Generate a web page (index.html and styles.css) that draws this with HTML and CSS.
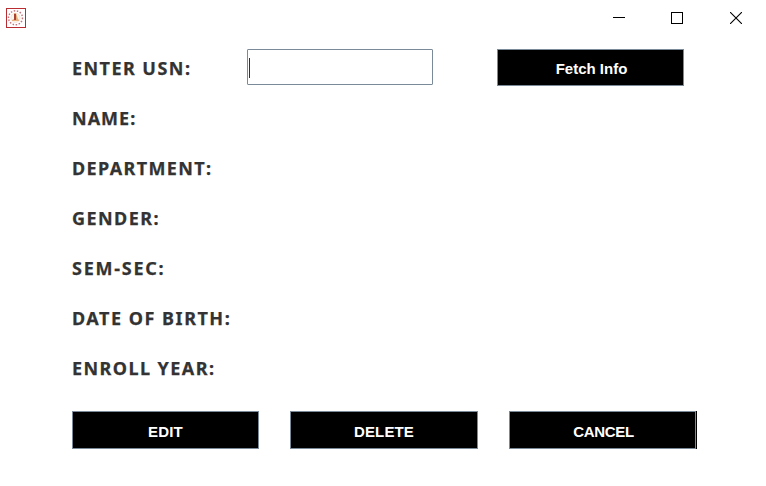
FILE: index.html
```html
<!DOCTYPE html>
<html lang="en">
<head>
<meta charset="utf-8">
<title>Student Info</title>
<link rel="stylesheet" href="styles.css">
</head>
<body>
<div class="window">
  <header class="titlebar">
    <svg class="app-icon" width="20" height="20" viewBox="0 0 20 20">
      <rect x=".5" y=".5" width="19" height="19" fill="#fff" stroke="#b92c31"/>
      <circle cx="9.5" cy="9.8" r="7" fill="none" stroke="#c4757c" stroke-width="1.5" stroke-dasharray="1.5 1.6"/>
      <circle cx="9.5" cy="9.8" r="4.6" fill="#fdf6ea" stroke="#f0dfd4" stroke-width=".8"/>
      <path d="M8 5h2l1 3 1 3 1 1v1H6v-1l2-1V8z" fill="#e8b07c"/>
      <path d="M8 6h2v6H8z" fill="#a94232"/>
    </svg>
    <div class="controls">
      <svg width="12" height="12" viewBox="0 0 12 12" shape-rendering="crispEdges"><path d="M0 5.5h12" stroke="#000"/></svg>
      <svg width="12" height="12" viewBox="0 0 12 12" shape-rendering="crispEdges"><rect x=".5" y=".5" width="11" height="11" fill="none" stroke="#000"/></svg>
      <svg width="12" height="12" viewBox="0 0 12 12"><path d="M0 0l12 12M12 0L0 12" stroke="#000" stroke-width="1.1"/></svg>
    </div>
  </header>
  <main class="form">
    <div class="row lookup">
      <span class="label usn">ENTER USN:</span>
      <div class="field"><span class="caret"></span></div>
      <button class="button fetch">Fetch Info</button>
    </div>
    <div class="row"><span class="label name">NAME:</span></div>
    <div class="row"><span class="label department">DEPARTMENT:</span></div>
    <div class="row"><span class="label gender">GENDER:</span></div>
    <div class="row"><span class="label section">SEM-SEC:</span></div>
    <div class="row"><span class="label birth">DATE OF BIRTH:</span></div>
    <div class="row"><span class="label year">ENROLL YEAR:</span></div>
    <div class="actions">
      <button class="button edit">EDIT</button>
      <button class="button delete">DELETE</button>
      <button class="button cancel">CANCEL</button>
    </div>
  </main>
</div>
</body>
</html>
```

FILE: styles.css
```css
* { box-sizing: border-box; }
body { margin: 0; background: #fff; }
.window { width: 766px; height: 486px; overflow: hidden; background: #fff; }
.titlebar { display: flex; justify-content: space-between; height: 36px; padding: 8px 24px 0 6px; }
.titlebar svg { display: block; }
.controls { display: flex; gap: 46px; padding-top: 4px; }
.controls svg:last-child { margin-left: 1px; }
.form { padding: 8px 0 0 72px; }
.row { display: flex; align-items: center; height: 50px; }
.lookup { align-items: flex-start; padding-top: 5px; }
.label { padding-bottom: 2px; font: bold 18px/24px "Noto Sans", sans-serif; letter-spacing: 1px; color: #333; -webkit-text-stroke: .25px #333; white-space: nowrap; }
.usn { width: 175px; margin-top: 7px; letter-spacing: 1.45px; }
.department { letter-spacing: 1.38px; }
.gender { letter-spacing: 1.45px; }
.section { letter-spacing: 1.75px; }
.birth { letter-spacing: 1.52px; }
.year { letter-spacing: 1.43px; }
.field { width: 186px; height: 36px; padding: 8px 0 0 1px; border: 1px solid #7a8a99; border-radius: 1px; }
.caret { display: block; width: 1px; height: 20px; background: #333; }
.button { display: block; padding: 0; border: 1px solid #7a8a99; border-radius: 0; background: #000; color: #fff; font: bold 15px/20px "Liberation Sans", Arial, sans-serif; white-space: nowrap; }
.fetch { width: 187px; height: 37px; margin-left: 64px; padding: 2px 0 0 2px; }
.actions { display: flex; gap: 31px; padding-top: 17px; }
.actions .button { width: 187px; height: 38px; padding-top: 3px; }
.actions .edit { letter-spacing: .2px; }
.actions .delete { width: 188px; letter-spacing: .15px; }
.actions .cancel { padding-left: 2px; letter-spacing: -.3px; box-shadow: 1px 0 #000; }
```
